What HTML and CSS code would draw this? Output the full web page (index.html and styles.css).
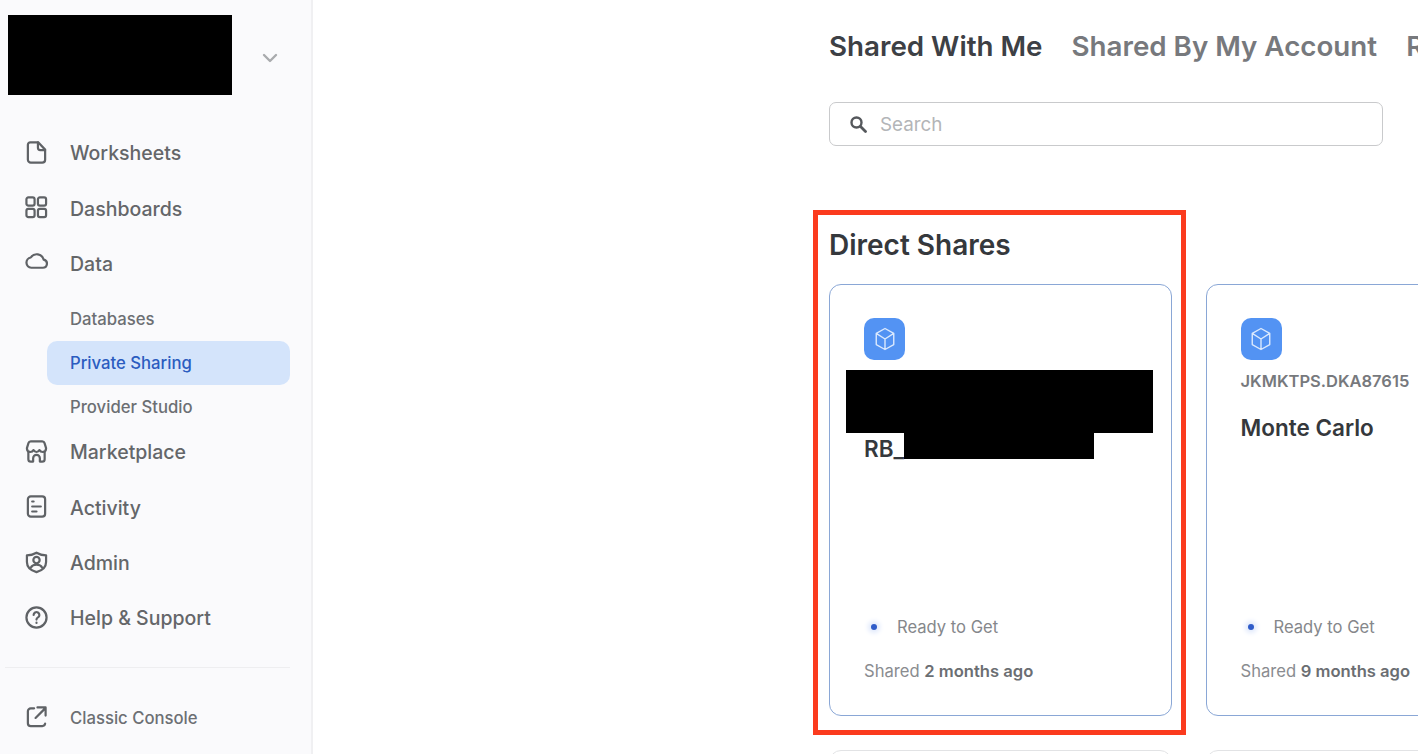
FILE: index.html
```html
<!DOCTYPE html>
<html lang="en">
<head>
<meta charset="utf-8">
<title>Private Sharing</title>
<link rel="stylesheet" href="styles.css">
</head>
<body>
<div class="app">
  <aside class="sidebar">
    <div class="account">
      <div class="logo-block"></div>
      <svg class="chevron" viewBox="0 0 16 10" width="16" height="10"><path d="M2 2l6 6 6-6" fill="none" stroke="#a9abae" stroke-width="2.400" stroke-linecap="round" stroke-linejoin="round"/></svg>
    </div>
    <nav class="nav">
      <a class="item"><svg class="icon" viewBox="0 0 24 24"><path d="M5.500 1.500h8.500l7 7.500v10.500a3 3 0 0 1-3 3H6a3 3 0 0 1-3-3V4a2.500 2.500 0 0 1 2.500-2.500z"/><path d="M13.500 1.500V7a2.500 2.500 0 0 0 2.500 2.500h5"/></svg>Worksheets</a>
      <a class="item"><svg class="icon" viewBox="0 0 24 24"><rect x="1.500" y="1.500" width="8.500" height="8.500" rx="2"/><rect x="13.500" y="1.500" width="8.500" height="8.500" rx="2"/><rect x="1.500" y="13.500" width="8.500" height="8.500" rx="2"/><rect x="13.500" y="13.500" width="8.500" height="8.500" rx="2"/></svg>Dashboards</a>
      <a class="item"><svg class="icon" viewBox="0 0 24 24"><path d="M6.500 19h12a4.300 4.300 0 0 0 1-8.500A7.500 7.500 0 0 0 6 8.300 5.400 5.400 0 0 0 6.500 19z" transform="translate(0 -1.500)"/></svg>Data</a>
      <div class="sub-group">
        <a class="sub">Databases</a>
        <a class="sub active">Private Sharing</a>
        <a class="sub">Provider Studio</a>
      </div>
      <a class="item"><svg class="icon" viewBox="0 0 24 24"><path d="M6 1.500h12a2.500 2.500 0 0 1 2.400 1.800L22 8.500a4 4 0 0 1-3.500 4c-1.700 0-2.800-.8-3.400-2-.7 1.200-1.600 2-3.100 2s-2.400-.8-3.100-2c-.6 1.200-1.700 2-3.400 2A4 4 0 0 1 2 8.500l1.600-5.200A2.500 2.500 0 0 1 6 1.500z"/><path d="M3.500 12.500V20A2.500 2.500 0 0 0 6 22.500h2.500V19a3.500 3.500 0 0 1 7 0v3.500H18a2.500 2.500 0 0 0 2.500-2.500v-7.500"/></svg>Marketplace</a>
      <a class="item"><svg class="icon" viewBox="0 0 24 24"><rect x="3" y="1.500" width="18" height="21" rx="3"/><path d="M7.500 6.800h1.500M7.500 12h9M7.500 17.200h4.500"/></svg>Activity</a>
      <a class="item"><svg class="icon" viewBox="0 0 24 24"><path d="M12 1.800c3 1.900 6 2.700 10 2.700v7c0 5.300-4.500 9-10 10.500C6.500 20.500 2 16.800 2 11.500v-7c4 0 7-.8 10-2.700z"/><circle cx="12" cy="9.500" r="3.300"/><path d="M6 17.500c1.200-2.200 3.300-3.200 6-3.200s4.800 1 6 3.200"/></svg>Admin</a>
      <a class="item"><svg class="icon" viewBox="0 0 24 24"><circle cx="12" cy="12" r="10.500"/><path d="M9 9.300a3 3 0 1 1 4.500 2.600c-1 .6-1.500 1.200-1.500 2.300M12 17.400v.3"/></svg>Help &amp; Support</a>
    </nav>
    <div class="nav-foot">
      <a class="foot-link"><svg class="icon" viewBox="0 0 24 24"><path d="M9.500 3.500H6A3 3 0 0 0 3 6.500V19a3 3 0 0 0 3 3h12a3 3 0 0 0 3-2.500"/><path d="M11 13.500L21 3.500M13 2.500h8.500V11"/></svg>Classic Console</a>
    </div>
  </aside>
  <main class="main">
    <div class="tabs">
      <span class="tab current">Shared With Me</span>
      <span class="tab">Shared By My Account</span>
      <span class="tab">Requests</span>
    </div>
    <div class="search">
      <svg class="search-icon" viewBox="0 0 18 18" width="18" height="18"><circle cx="7.500" cy="7.500" r="5" fill="none" stroke="#55585c" stroke-width="2.400"/><path d="M11.500 11.500l5 5" stroke="#55585c" stroke-width="2.800" stroke-linecap="round"/></svg>
      <span class="placeholder">Search</span>
    </div>
    <h2 class="section-title">Direct Shares</h2>
    <div class="cards">
      <article class="card">
        <div class="cube"><svg viewBox="0 0 24 24" width="28" height="28"><path d="M12 3l7.500 4.200v9.600L12 21l-7.500-4.200V7.200zM4.500 7.200L12 12l7.500-4.800M12 12v9"/></svg></div>
        <div class="provider"></div>
        <div class="name rb">RB_</div>
        <div class="status"><span class="dot"></span>Ready to Get</div>
        <div class="shared">Shared <b>2 months ago</b></div>
      </article>
      <article class="card">
        <div class="cube"><svg viewBox="0 0 24 24" width="28" height="28"><path d="M12 3l7.500 4.200v9.600L12 21l-7.500-4.200V7.200zM4.500 7.200L12 12l7.500-4.800M12 12v9"/></svg></div>
        <div class="provider">JKMKTPS.DKA87615</div>
        <div class="name">Monte Carlo</div>
        <div class="status"><span class="dot"></span>Ready to Get</div>
        <div class="shared">Shared <b>9 months ago</b></div>
      </article>
      <article class="card next"></article>
      <article class="card next"></article>
    </div>
  </main>
</div>
<div class="redact logo-redact"></div>
<div class="redact card-redact-a"></div>
<div class="redact card-redact-b"></div>
<div class="highlight"></div>
</body>
</html>
```
FILE: styles.css
```css
* { box-sizing: border-box; }
html, body { margin: 0; height: 100%; overflow: hidden; background: #fff; }
body { font-family: Inter, "Liberation Sans", sans-serif; color: #3c3f44; position: relative; }
.app { display: flex; height: 754px; width: 1418px; overflow: hidden; }

.sidebar { width: 313px; flex: none; background: #fafafc; border-right: 2px solid #f0f0f2; padding: 15px 21px 0 0; display: flex; flex-direction: column; }
.account { height: 80px; display: flex; align-items: center; justify-content: flex-end; padding-right: 13px; flex: none; }
.chevron { margin-top: 6px; margin-right: -1px; }
.nav { margin-top: 30.500px; display: flex; flex-direction: column; }
.item { height: 55.400px; flex: none; display: flex; align-items: center; font-size: 19.500px; font-weight: 500; color: #646669; padding-left: 25px; gap: 22px; }
.icon { width: 23px; height: 23px; flex: none; margin-top: -2px; fill: none; stroke: #5f6266; stroke-width: 2.300; stroke-linecap: round; stroke-linejoin: round; }
.sub-group { margin: 5px 0 -5px; display: flex; flex-direction: column; }
.sub { height: 44.300px; flex: none; display: flex; align-items: center; font-size: 16.700px; font-weight: 500; color: #6c6f73; margin-left: 47px; padding-left: 23px; border-radius: 10px; }
.sub.active { background: #d4e4fb; color: #2b5cc0; }
.nav-foot { margin: 20.500px 0 0 5px; border-top: 1px solid #eeeef0; padding-top: 28px; }
.foot-link { display: flex; align-items: center; gap: 22px; padding-left: 20px; height: 44px; font-size: 16.700px; font-weight: 500; color: #6c6f73; }

.main { flex: 1; padding: 0 0 0 516px; min-width: 0; }
.tabs { display: flex; gap: 29px; padding-top: 30px; white-space: nowrap; height: 102px; }
.tab { font-size: 27.750px; font-weight: 600; color: #77797d; line-height: 33px; }
.tab.current { color: #3d4045; }
.search { width: 554px; height: 44px; border: 1px solid #c9cacc; border-radius: 7px; display: flex; align-items: center; padding-left: 19px; gap: 13px; }
.placeholder { font-size: 18.800px; color: #b3b5b8; }
.section-title { margin: 82px 0 0; font-size: 28px; font-weight: 600; color: #35383c; line-height: 34px; height: 56px; }

.cards { display: grid; grid-template-columns: repeat(2, 343px); column-gap: 33.500px; row-gap: 34px; grid-auto-rows: 432px; }
.card { border: 1px solid #8aa7d6; border-radius: 12px; padding: 33px 0 0 34px; display: flex; flex-direction: column; background: #fff; white-space: nowrap; position: relative; }
.card.next { border-color: #e2e3e5; }
.cube { width: 41px; height: 42px; border-radius: 10px; background: #5393f3; display: flex; align-items: center; justify-content: center; flex: none; }
.cube svg { fill: none; stroke: #dbe9fd; stroke-width: 1.200; stroke-linejoin: round; }
.provider { margin-top: 10px; height: 22px; font-size: 16.500px; font-weight: 600; color: #77797d; line-height: 22px; }
.name { margin-top: 21px; font-size: 22.500px; font-weight: 600; color: #35383c; line-height: 30px; }
.name.rb { margin-top: 42px; }
.status { margin-top: auto; display: flex; align-items: center; font-size: 16.600px; color: #85878b; gap: 20px; padding-left: 7px; }
.dot { width: 6px; height: 6px; border-radius: 50%; background: #2f5cc9; box-shadow: 0 0 5px 3px #dfe8fb; }
.shared { margin-top: 24px; margin-bottom: 34px; font-size: 16.600px; color: #8a8c90; line-height: 20px; }
.shared b { font-weight: 600; color: #6b6e72; }

.redact { position: absolute; background: #000; }
.logo-redact { left: 8px; top: 15px; width: 224px; height: 80px; }
.card-redact-a { left: 846px; top: 370px; width: 307px; height: 63px; }
.card-redact-b { left: 904px; top: 433px; width: 190px; height: 26px; }
.highlight { position: absolute; left: 813px; top: 210px; width: 373px; height: 525px; border: 5px solid #fb3b1e; }
```
